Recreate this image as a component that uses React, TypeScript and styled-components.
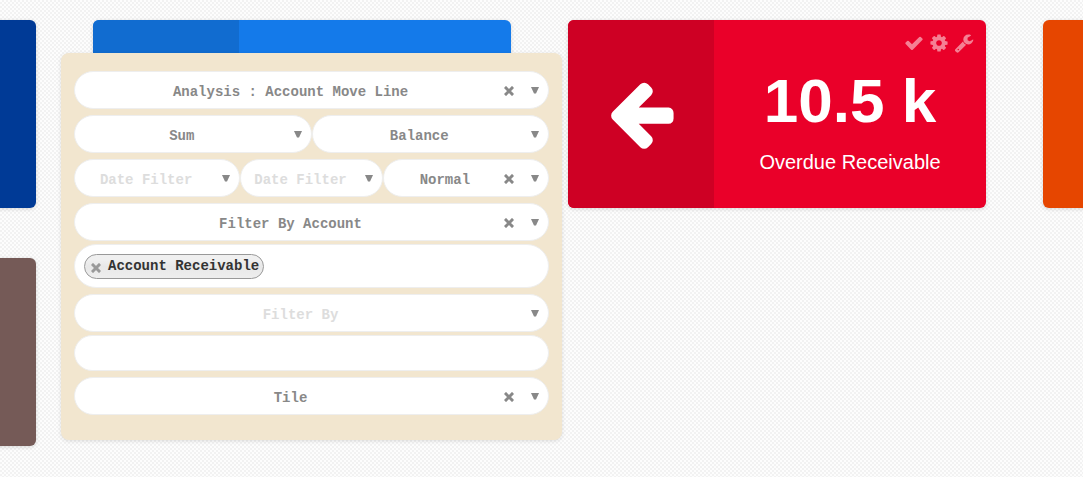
import React, { useState } from "react";
import styled, { createGlobalStyle } from "styled-components";

const GlobalStyle = createGlobalStyle`
  *, *::before, *::after { box-sizing: border-box; }
  body {
    margin: 0;
    min-height: 100vh;
    font-family: "Liberation Sans", Arial, sans-serif;
    background: repeating-conic-gradient(#f2f2f2 0 25%, #fdfdfd 0 50%) 0 0 / 4px 4px;
  }
`;

const Page = styled.main`
  overflow: hidden;
  min-height: 100vh;
  padding: 20px 0 32px;
`;

const Board = styled.div`
  display: grid;
  grid-template-columns: repeat(4, minmax(0, 1fr));
  gap: 50px 57px;
  margin: 0 -378px 0 -382px;
`;

const TileBox = styled.article<{ $color: string }>`
  position: relative;
  display: grid;
  grid-template-columns: 146px 1fr;
  min-height: 188px;
  border-radius: 6px;
  color: #fff;
  background: ${(p) => p.$color};
  box-shadow: 0 1px 4px rgba(0, 0, 0, 0.14);
`;

const TileSide = styled.div<{ $color?: string }>`
  display: flex;
  align-items: center;
  justify-content: center;
  padding-bottom: 2px;
  border-radius: 6px 0 0 6px;
  background: ${(p) => p.$color ?? "transparent"};
`;

const TileBody = styled.div`
  display: flex;
  flex-direction: column;
  align-items: center;
`;

const TileActions = styled.div`
  display: flex;
  align-self: flex-end;
  gap: 5px;
  padding: 13px 12px 0 0;
`;

const ActionButton = styled.button`
  display: flex;
  padding: 0;
  border: 0;
  background: none;
  color: rgba(255, 255, 255, 0.5);
  cursor: pointer;
`;

const TileValue = styled.div`
  margin-top: 12px;
  font-size: 62px;
  line-height: 72px;
  font-weight: 700;
`;

const TileLabel = styled.div`
  margin-top: 13px;
  font-size: 20px;
  line-height: 24px;
`;

const Panel = styled.form`
  position: absolute;
  z-index: 2;
  top: 33px;
  left: -32px;
  right: -51px;
  display: flex;
  flex-direction: column;
  gap: 6px;
  padding: 18px 13px 25px;
  border-radius: 8px;
  background: #f2e6cf;
  box-shadow: 0 1px 4px rgba(0, 0, 0, 0.12);
`;

const Row = styled.div<{ $columns?: string }>`
  display: grid;
  grid-template-columns: ${(p) => p.$columns ?? "1fr"};
`;

const Group = styled.div`
  display: flex;
  flex-direction: column;
  gap: 3px;
`;

const Field = styled.div`
  display: grid;
  grid-template-columns: 1fr 18px 26px;
  column-gap: 4px;
  align-items: center;
  height: 38px;
  border: 1px solid #eee;
  border-radius: 19px;
  background: #fff;
`;

const Select = styled.select<{ $empty: boolean; $clearable: boolean }>`
  grid-area: 1 / 1 / 2 / -1;
  width: 100%;
  height: 36px;
  padding: 3px ${(p) => (p.$clearable ? 42 : 22)}px 0 0;
  border: 0;
  border-radius: 18px;
  outline: 0;
  appearance: none;
  background: transparent;
  font: 700 14px "Liberation Mono", monospace;
  text-align: center;
  text-align-last: center;
  color: ${(p) => (p.$empty ? "#ddd" : "#888")};
`;

const ClearButton = styled.button`
  grid-area: 1 / 2;
  z-index: 1;
  display: flex;
  justify-content: center;
  padding: 2px 0 0;
  border: 0;
  background: none;
  color: #888;
  cursor: pointer;
`;

const Arrow = styled.svg`
  grid-area: 1 / 3;
  justify-self: center;
  pointer-events: none;
`;

const TagBox = styled.div`
  display: flex;
  align-items: center;
  min-height: 44px;
  padding: 0 9px;
  border: 1px solid #eee;
  border-radius: 22px;
  background: #fff;
`;

const Tag = styled.span`
  display: flex;
  align-items: center;
  gap: 7px;
  height: 25px;
  padding: 0 4px 0 6px;
  border: 1px solid #999;
  border-radius: 13px;
  background: linear-gradient(#f0f0f0 20%, #e8e8e8 50%, #eee);
  color: #333;
  font: 700 14px "Liberation Mono", monospace;
`;

const TagRemove = styled.button`
  display: flex;
  padding: 3px 0 0;
  border: 0;
  background: none;
  color: #999;
  cursor: pointer;
`;

const TextBox = styled.input`
  width: 100%;
  height: 36px;
  padding: 0 18px;
  border: 1px solid #eee;
  border-radius: 18px;
  outline: 0;
  background: #fff;
  font: 700 14px "Liberation Mono", monospace;
  color: #888;
`;

const paths = {
  check:
    "M1671 566q0 40-28 68l-724 724-136 136q-28 28-68 28t-68-28l-136-136-362-362q-28-28-28-68t28-68l136-136q28-28 68-28t68 28l294 295 656-657q28-28 68-28t68 28l136 136q28 28 28 68z",
  cog: "M1152 896q0-106-75-181t-181-75-181 75-75 181 75 181 181 75 181-75 75-181zm512-109v222q0 12-8 23t-20 13l-185 28q-19 54-39 91 35 50 107 138 10 12 10 25t-9 23q-27 37-99 108t-94 71q-12 0-26-9l-138-108q-44 23-91 38-16 136-29 186-7 28-36 28h-222q-14 0-24.5-8.5t-11.5-21.5l-28-184q-49-16-90-37l-141 107q-10 9-25 9-14 0-25-11-126-114-165-168-7-10-7-23 0-12 8-23 15-21 51-66.5t54-70.5q-27-50-41-99l-183-27q-13-2-21-12.5t-8-23.5v-222q0-12 8-23t19-13l186-28q14-46 39-92-40-57-107-138-10-12-10-24 0-10 9-23 26-36 98.5-107.5t94.5-71.5q13 0 26 10l138 107q44-23 91-38 16-136 29-186 7-28 36-28h222q14 0 24.5 8.5t11.5 21.5l28 184q49 16 90 37l142-107q9-9 24-9 13 0 25 10 129 119 165 170 7 8 7 22 0 12-8 23-15 21-51 66.5t-54 70.5q26 50 41 98l183 28q13 2 21 12.5t8 23.5z",
  wrench:
    "M448 1472q0-26-19-45t-45-19-45 19-19 45 19 45 45 19 45-19 19-45zm644-420l-682 682q-37 37-90 37-52 0-91-37l-106-108q-38-36-38-90 0-53 38-91l681-681q39 98 114.5 173.5t173.5 114.5zm634-435q0 39-23 106-47 134-164.5 217.5t-258.5 83.5q-185 0-316.5-131.5t-131.5-316.5 131.5-316.5 316.5-131.5q58 0 121.5 16.5t107.5 46.5q16 11 16 28t-16 28l-293 169v224l193 107q5-3 79-48.5t135.5-81 70.5-35.5q15 0 23.5 10t8.5 25z",
  arrowLeft:
    "M1664 896v128q0 53-32.5 90.5t-84.5 37.5h-704l293 294q38 36 38 90t-38 90l-75 76q-37 37-90 37-52 0-91-37l-651-652q-37-37-37-90 0-52 37-91l651-650q38-38 91-38 52 0 90 38l75 74q38 38 38 91t-38 91l-293 293h704q52 0 84.5 37.5t32.5 90.5z",
};

function Icon({ name, size }: { name: keyof typeof paths; size: number }) {
  return (
    <svg width={size} height={size} viewBox="0 0 1792 1792" fill="currentColor" aria-hidden="true">
      <path d={paths[name]} />
    </svg>
  );
}

function Cross() {
  return (
    <svg width="10" height="10" viewBox="0 0 10 10" aria-hidden="true">
      <path d="M2 2 8 8M8 2 2 8" stroke="currentColor" strokeWidth="3" strokeLinecap="square" />
    </svg>
  );
}

interface DropdownProps {
  label: string;
  initial?: string;
  placeholder?: string;
  clearable?: boolean;
}

function Dropdown({ label, initial = "", placeholder = "", clearable = false }: DropdownProps) {
  const [value, setValue] = useState(initial);
  return (
    <Field>
      <Select
        aria-label={label}
        value={value}
        $empty={value === ""}
        $clearable={clearable}
        onChange={(e) => setValue(e.target.value)}
      >
        {(!initial || value === "") && <option value="">{placeholder}</option>}
        {initial && <option value={initial}>{initial}</option>}
      </Select>
      {clearable && (
        <ClearButton type="button" aria-label={`Clear ${label}`} onClick={() => setValue("")}>
          <Cross />
        </ClearButton>
      )}
      <Arrow width="8" height="7" viewBox="0 0 8 7" aria-hidden="true">
        <path d="M0 0H8L5 6.5H3Z" fill="#888" />
      </Arrow>
    </Field>
  );
}

function SettingsPanel() {
  return (
    <Panel>
      <Row>
        <Dropdown label="Analysis" initial="Analysis : Account Move Line" clearable />
      </Row>
      <Row $columns="1fr 1fr">
        <Dropdown label="Aggregate" initial="Sum" />
        <Dropdown label="Measure" initial="Balance" />
      </Row>
      <Row $columns="7fr 6fr 7fr">
        <Dropdown label="Date from" placeholder="Date Filter" />
        <Dropdown label="Date to" placeholder="Date Filter" />
        <Dropdown label="Mode" initial="Normal" clearable />
      </Row>
      <Group>
        <Dropdown label="Filter field" initial="Filter By Account" clearable />
        <TagBox>
          <Tag>
            <TagRemove type="button" aria-label="Remove Account Receivable">
              <Cross />
            </TagRemove>
            Account Receivable
          </Tag>
        </TagBox>
      </Group>
      <Group>
        <Dropdown label="Second filter" placeholder="Filter By" />
        <TextBox type="text" aria-label="Filter value" />
      </Group>
      <Row>
        <Dropdown label="Display" initial="Tile" clearable />
      </Row>
    </Panel>
  );
}

export default function App() {
  return (
    <>
      <GlobalStyle />
      <Page>
        <Board>
          <TileBox $color="#003a96" />
          <TileBox $color="#147aea">
            <TileSide $color="#116cd0" />
            <SettingsPanel />
          </TileBox>
          <TileBox $color="#ea0029">
            <TileSide $color="#ce0024">
              <Icon name="arrowLeft" size={76} />
            </TileSide>
            <TileBody>
              <TileActions>
                <ActionButton type="button" aria-label="Confirm">
                  <Icon name="check" size={20} />
                </ActionButton>
                <ActionButton type="button" aria-label="Settings">
                  <Icon name="cog" size={20} />
                </ActionButton>
                <ActionButton type="button" aria-label="Configure">
                  <Icon name="wrench" size={20} />
                </ActionButton>
              </TileActions>
              <TileValue>10.5 k</TileValue>
              <TileLabel>Overdue Receivable</TileLabel>
            </TileBody>
          </TileBox>
          <TileBox $color="#e64600" />
          <TileBox $color="#755a57" />
        </Board>
      </Page>
    </>
  );
}
